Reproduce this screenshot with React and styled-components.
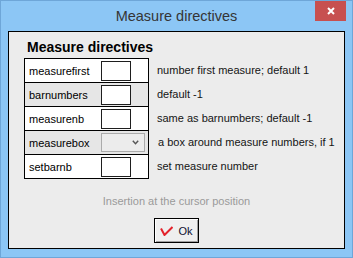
import React from 'react';
import styled, { createGlobalStyle } from 'styled-components';

const GlobalStyle = createGlobalStyle`
  html, body {
    margin: 0;
    padding: 0;
    background: #8cc6f5;
  }
`;

const Window = styled.div`
  width: 353px;
  height: 258px;
  box-sizing: border-box;
  border: 1px solid #6ea6d8;
  background: #8cc6f5;
  display: flex;
  flex-direction: column;
  font-family: "Liberation Sans", Arial, sans-serif;
`;

const TitleBar = styled.div`
  height: 30px;
  display: grid;
  grid-template-columns: 1fr auto 1fr;
  align-items: start;
`;

const Title = styled.div`
  grid-column: 2;
  font-size: 14.5px;
  line-height: 30px;
  color: #353535;
`;

const CloseButton = styled.div`
  grid-column: 3;
  justify-self: end;
  margin-right: 6px;
  width: 31px;
  height: 20px;
  background: #c75050;
  display: flex;
  align-items: center;
  justify-content: center;
`;

const Client = styled.div`
  flex: 1;
  margin: 0 7px 8px;
  border: 1px solid #000;
  background: #ececec;
  padding-top: 7px;
  display: flex;
  flex-direction: column;
`;

const Body = styled.div`
  padding-left: 15px;
`;

const Heading = styled.div`
  margin-left: 3px;
  font-size: 14px;
  font-weight: bold;
  line-height: 16px;
  color: #000;
`;

const Columns = styled.div`
  margin-top: 3px;
  display: flex;
  gap: 8px;
`;

const Table = styled.div`
  width: 125px;
  box-sizing: border-box;
  border: 1px solid #000;
`;

const Row = styled.div`
  height: 23px;
  display: flex;
  align-items: center;
  padding-left: 4px;
  background: ${p => (p.$shaded ? '#e6e6e6' : '#fff')};
  & + & {
    border-top: 1px solid #000;
  }
`;

const Label = styled.span`
  width: 72px;
  font-size: 11px;
  color: #000;
`;

const Field = styled.div`
  width: 30px;
  height: 20px;
  box-sizing: border-box;
  border: 1px solid #1e1e1e;
  background: #fff;
`;

const Select = styled.div`
  width: 44px;
  height: 19px;
  box-sizing: border-box;
  border: 1px solid #ababab;
  background: #ececec;
  display: flex;
  align-items: center;
  justify-content: flex-end;
  padding-right: 5px;
`;

const Descriptions = styled.div`
  display: flex;
  flex-direction: column;
`;

const Desc = styled.div`
  height: 24px;
  display: flex;
  align-items: center;
  padding-left: ${p => p.$indent || 0}px;
  font-size: 11px;
  color: #141414;
  white-space: nowrap;
`;

const Hint = styled.div`
  margin-top: 16px;
  text-align: center;
  font-size: 11px;
  line-height: 13px;
  color: #9a9a9a;
`;

const OkButton = styled.div`
  align-self: center;
  margin-top: 10px;
  width: 45px;
  height: 25px;
  box-sizing: border-box;
  border: 1px solid #000;
  background: #efefef;
  box-shadow: inset 1px 1px #fff, inset -1px -1px #a0a0a0;
  display: flex;
  align-items: center;
  justify-content: center;
  gap: 5px;
  font-size: 11px;
  color: #101030;
`;

const rows = [
  { name: 'measurefirst', desc: 'number first measure; default 1' },
  { name: 'barnumbers', desc: 'default -1' },
  { name: 'measurenb', desc: 'same as barnumbers; default -1' },
  { name: 'measurebox', desc: 'a box around measure numbers, if 1', select: true, indent: 1 },
  { name: 'setbarnb', desc: 'set measure number' },
];

export default function App() {
  return (
    <>
      <GlobalStyle />
      <Window>
        <TitleBar>
          <Title>Measure directives</Title>
          <CloseButton>
            <svg width="8" height="8" viewBox="0 0 8 8">
              <path d="M1 1 L7 7 M7 1 L1 7" stroke="#fff" strokeWidth="2" />
            </svg>
          </CloseButton>
        </TitleBar>
        <Client>
          <Body>
            <Heading>Measure directives</Heading>
            <Columns>
              <Table>
                {rows.map((r, i) => (
                  <Row key={r.name} $shaded={i % 2 === 1}>
                    <Label>{r.name}</Label>
                    {r.select ? (
                      <Select>
                        <svg width="7" height="5" viewBox="0 0 7 5">
                          <path d="M0.8 0.8 L3.5 3.8 L6.2 0.8" fill="none" stroke="#555" strokeWidth="1.4" />
                        </svg>
                      </Select>
                    ) : (
                      <Field />
                    )}
                  </Row>
                ))}
              </Table>
              <Descriptions>
                {rows.map(r => (
                  <Desc key={r.name} $indent={r.indent}>{r.desc}</Desc>
                ))}
              </Descriptions>
            </Columns>
          </Body>
          <Hint>Insertion at the cursor position</Hint>
          <OkButton>
            <svg width="13" height="10" viewBox="0 0 13 10">
              <path d="M1 2.5 L4.5 9 L12.5 1" fill="none" stroke="#e3222b" strokeWidth="2" />
            </svg>
            <span>Ok</span>
          </OkButton>
        </Client>
      </Window>
    </>
  );
}
